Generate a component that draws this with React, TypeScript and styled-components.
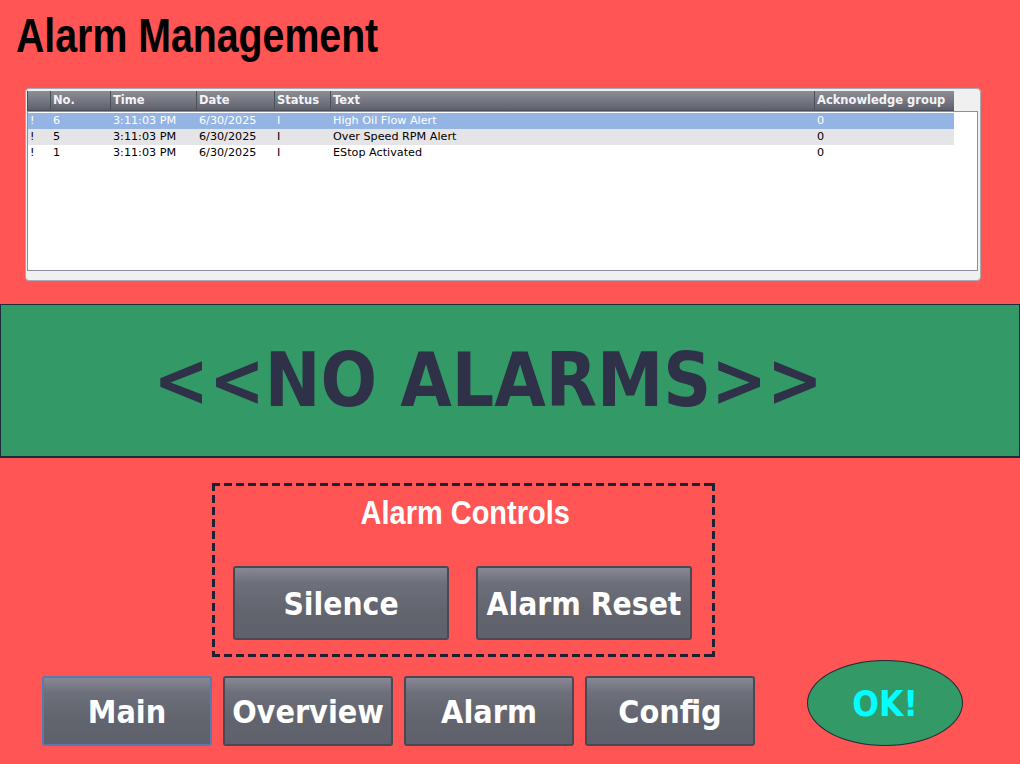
import styled, { createGlobalStyle } from 'styled-components';

const GlobalStyle = createGlobalStyle`
  html, body {
    margin: 0;
    padding: 0;
    background: #ff5555;
  }
  * {
    box-sizing: border-box;
  }
`;

const Screen = styled.div`
  width: 1020px;
  height: 764px;
  background: #ff5555;
  display: flex;
  flex-direction: column;
  overflow: hidden;
`;

const Title = styled.h1`
  margin: 0;
  padding: 9px 0 0 16px;
  height: 63px;
  font-family: 'Liberation Sans', Arial, sans-serif;
  font-weight: bold;
  font-size: 48px;
  line-height: 54px;
  color: #000;
  span {
    display: inline-block;
    transform: scaleX(0.818);
    transform-origin: left center;
    white-space: nowrap;
  }
`;

const AlarmView = styled.div`
  margin: 25px 0 0 25px;
  width: 956px;
  height: 193px;
  padding: 2px 2px 9px 1px;
  background: #f0f0f0;
  border: 1px solid #a8aab2;
  border-radius: 4px;
  display: flex;
  flex-direction: column;
`;

const cols = '23px 60px 86px 78px 56px 484px 140px';

const HeaderRow = styled.div`
  display: grid;
  grid-template-columns: ${cols};
  width: 927px;
  height: 20px;
  flex-shrink: 0;
`;

const HeaderCell = styled.div`
  background: linear-gradient(#8c8d97 0%, #71737e 60%, #5d5f6a 100%);
  border-left: 1px solid #4c4e58;
  border-bottom: 1px solid #4c4e58;
  padding: 1px 0 0 2px;
  font-family: 'DejaVu Sans', Verdana, sans-serif;
  font-weight: bold;
  font-size: 11.5px;
  line-height: 16px;
  color: #f4f4f6;
  white-space: nowrap;
  overflow: hidden;
`;

const ListBody = styled.div`
  flex: 1;
  background: #fff;
  border: 1px solid #8e9099;
  padding-top: 1px;
`;

const Row = styled.div<{ $tone: 'sel' | 'alt' | 'plain' }>`
  display: grid;
  grid-template-columns: ${cols};
  width: 926px;
  height: 16px;
  background: ${(p) => (p.$tone === 'sel' ? '#94b4e4' : p.$tone === 'alt' ? '#e5e5e7' : '#fff')};
  color: ${(p) => (p.$tone === 'sel' ? '#fff' : '#000')};
`;

const Cell = styled.div`
  padding-left: 2px;
  font-family: 'DejaVu Sans', Verdana, sans-serif;
  font-size: 11.2px;
  line-height: 16px;
  white-space: nowrap;
  overflow: hidden;
`;

const Band = styled.div`
  margin-top: 23px;
  width: 1020px;
  height: 154px;
  background: #339966;
  border: 1px solid #1f2a3c;
  border-bottom-width: 2px;
  display: flex;
  align-items: center;
  justify-content: center;
  font-family: 'DejaVu Sans Condensed', 'DejaVu Sans', sans-serif;
  font-stretch: condensed;
  font-weight: bold;
  font-size: 74px;
  color: #2e3148;
  padding: 0 44px 2px 0;
`;

const dash = '#1c2133';

const ControlsBox = styled.div`
  margin: 25px 0 0 212px;
  width: 503px;
  height: 174px;
  padding: 10px 3px 3px 21px;
  background:
    linear-gradient(90deg, ${dash} 8px, transparent 0) top left / 12px 3px repeat-x,
    linear-gradient(90deg, ${dash} 8px, transparent 0) bottom left / 12px 3px repeat-x,
    linear-gradient(180deg, ${dash} 8px, transparent 0) top left / 3px 12px repeat-y,
    linear-gradient(180deg, ${dash} 8px, transparent 0) top right / 3px 12px repeat-y;
  display: flex;
  flex-direction: column;
`;

const ControlsTitle = styled.div`
  font-family: 'Liberation Sans', Arial, sans-serif;
  font-weight: bold;
  font-size: 33px;
  line-height: 40px;
  color: #fff;
  text-align: center;
  padding-right: 14px;
  span {
    display: inline-block;
    transform: scaleX(0.878);
    white-space: nowrap;
  }
`;

const ControlsRow = styled.div`
  margin-top: 33px;
  display: flex;
  gap: 27px;
  align-items: flex-start;
`;

const Button = styled.div<{ $w: number; $h: number; $focus?: boolean }>`
  width: ${(p) => p.$w}px;
  height: ${(p) => p.$h}px;
  border: 2px solid ${(p) => (p.$focus ? '#5a79ad' : '#474955')};
  border-radius: 3px;
  background: linear-gradient(#878893 0%, #6d6f7a 22%, #62646e 60%, #5e606b 100%);
  display: flex;
  align-items: center;
  justify-content: center;
  font-family: 'DejaVu Sans Condensed', 'DejaVu Sans', sans-serif;
  font-stretch: condensed;
  font-weight: bold;
  font-size: ${(p) => (p.$h > 72 ? 31.5 : 32)}px;
  color: #fff;
  white-space: nowrap;
  padding-top: 2px;
`;

const NavRow = styled.div`
  margin: 3px 0 0 42px;
  display: flex;
  align-items: flex-end;
  gap: 11px;
`;

const OkBadge = styled.div`
  margin-left: 41px;
  width: 156px;
  height: 86px;
  border-radius: 50%;
  border: 1px solid #1f2a3c;
  background: #339966;
  display: flex;
  align-items: center;
  justify-content: center;
  font-family: 'DejaVu Sans Condensed', 'DejaVu Sans', sans-serif;
  font-stretch: condensed;
  font-weight: bold;
  font-size: 35px;
  color: #00ffff;
  padding-top: 2px;
`;

const headers = ['', 'No.', 'Time', 'Date', 'Status', 'Text', 'Acknowledge group'];

const alarms = [
  { no: '6', text: 'High Oil Flow Alert', tone: 'sel' as const },
  { no: '5', text: 'Over Speed RPM Alert', tone: 'alt' as const },
  { no: '1', text: 'EStop Activated', tone: 'plain' as const },
];

export default function App() {
  return (
    <Screen>
      <GlobalStyle />
      <Title>
        <span>Alarm Management</span>
      </Title>
      <AlarmView>
        <HeaderRow>
          {headers.map((h, i) => (
            <HeaderCell key={i}>{h}</HeaderCell>
          ))}
        </HeaderRow>
        <ListBody>
          {alarms.map((a) => (
            <Row key={a.no} $tone={a.tone}>
              <Cell>!</Cell>
              <Cell>{a.no}</Cell>
              <Cell>3:11:03 PM</Cell>
              <Cell>6/30/2025</Cell>
              <Cell>I</Cell>
              <Cell>{a.text}</Cell>
              <Cell>0</Cell>
            </Row>
          ))}
        </ListBody>
      </AlarmView>
      <Band>&lt;&lt;NO ALARMS&gt;&gt;</Band>
      <ControlsBox>
        <ControlsTitle>
          <span>Alarm Controls</span>
        </ControlsTitle>
        <ControlsRow>
          <Button $w={216} $h={74}>Silence</Button>
          <Button $w={216} $h={74}>Alarm Reset</Button>
        </ControlsRow>
      </ControlsBox>
      <NavRow>
        <Button $w={170} $h={70} $focus>Main</Button>
        <Button $w={170} $h={70}>Overview</Button>
        <Button $w={170} $h={70}>Alarm</Button>
        <Button $w={170} $h={70}>Config</Button>
        <OkBadge>OK!</OkBadge>
      </NavRow>
    </Screen>
  );
}
